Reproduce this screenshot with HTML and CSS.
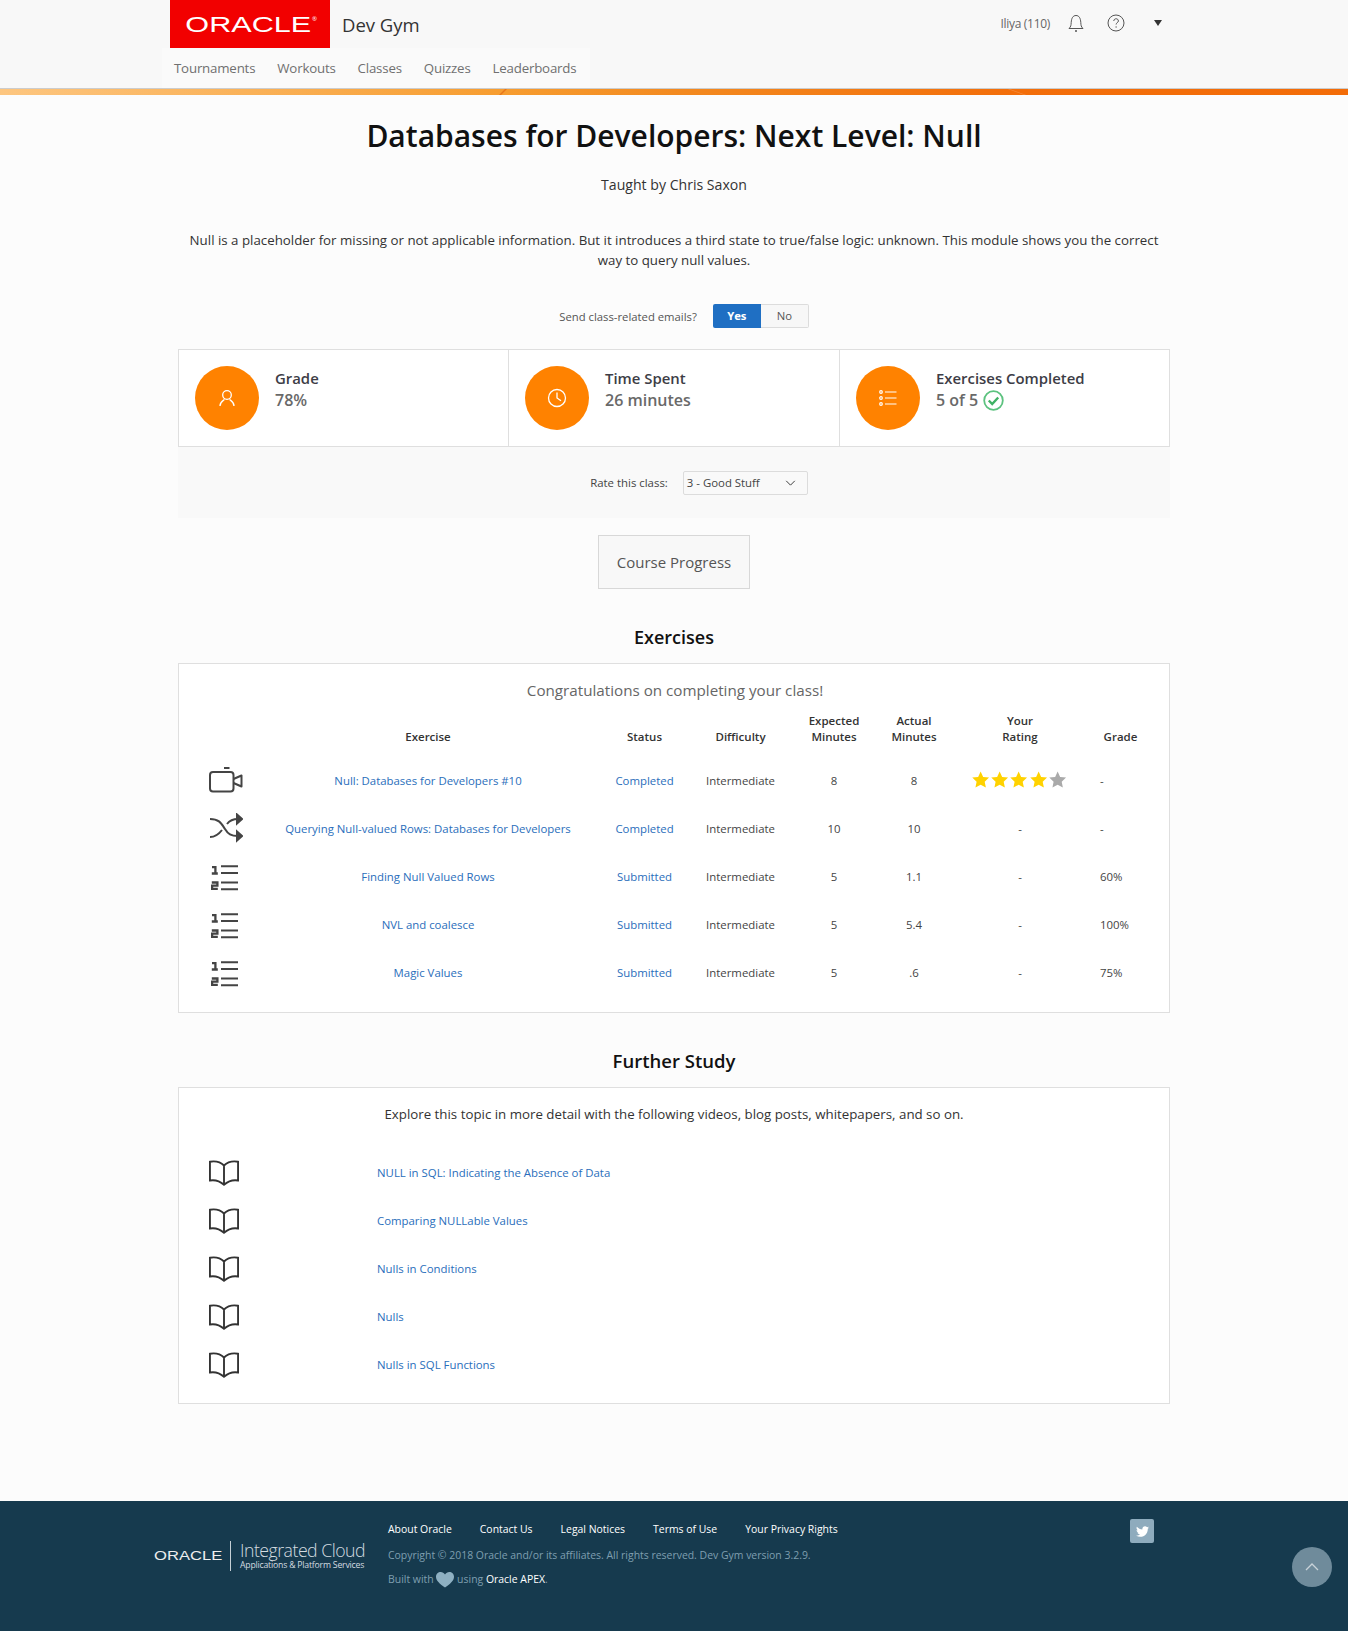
FILE: index.html
```html
<!DOCTYPE html>
<html lang="en">
<head>
    <meta charset="UTF-8">
    <title>Databases for Developers: Next Level: Null - Dev Gym</title>
    <link rel="stylesheet" href="styles.css">
</head>
<body>
    <svg class="sprites" width="0" height="0">
        <symbol id="i-list" viewBox="0 0 28 26">
            <path d="M1 2.200h3.400v6.500M.8 8.500h6M.8 17.500h5.600v3.200H1.100v3.200h5.700" fill="none" stroke="currentColor" stroke-width="2.300"/>
            <path d="M10 1.200h17M10 7.900h17M10 17.500h17M10 24.200h17" stroke="currentColor" stroke-width="2"/>
        </symbol>
        <symbol id="i-book" viewBox="0 0 32 28">
            <path d="M1 2c6-1 11 0 15 4 4-4 9-5 15-4v20c-6-1-11 1-15 4.500C12 23 7 21 1 22zM16 6v20" fill="none" stroke="currentColor" stroke-width="2"/>
        </symbol>
        <symbol id="i-star" viewBox="0 0 20 20">
            <path d="M10 1.500l2.600 5.700 6.100.7-4.500 4.200 1.200 6.100L10 15.200l-5.400 3 1.200-6.100L1.300 7.900l6.100-.7z"/>
        </symbol>
    </svg>

    <!-- Header -->
    <header class="site-header">
        <div class="header-row">
            <a href="#" class="logo"><span>ORACLE</span><sup>®</sup></a>
            <span class="app-name">Dev Gym</span>
            <div class="user-menu">
                <span class="user-name">Iliya (110)</span>
                <svg class="user-icon" width="16" height="18" viewBox="0 0 16 18" fill="none" stroke="#555" stroke-width="1"><path d="M1 14.500h14c-2-2-2-3-2.200-6C12.500 4 11 1.500 8 1.500S3.500 4 3.200 8.500C3 11.500 3 12.500 1 14.500z"/><path d="M7 17h2" stroke-width="1.500"/></svg>
                <svg class="user-icon help" width="18" height="18" viewBox="0 0 18 18" fill="none" stroke="#555"><circle cx="9" cy="9" r="8"/><path d="M6.800 7c0-3 4.600-3 4.600 0 0 1.600-2.300 1.700-2.300 3.500M9.100 12.300v1.400"/></svg>
                <span class="caret"></span>
            </div>
        </div>
        <nav class="main-nav">
            <a href="#">Tournaments</a>
            <a href="#">Workouts</a>
            <a href="#">Classes</a>
            <a href="#">Quizzes</a>
            <a href="#">Leaderboards</a>
        </nav>
    </header>
    <div class="accent-bar"></div>

    <main class="container">
        <h1 class="class-title">Databases for Developers: Next Level: Null</h1>
        <p class="taught-by">Taught by Chris Saxon</p>
        <p class="class-desc">Null is a placeholder for missing or not applicable information. But it introduces a third state to true/false logic: unknown. This module shows you the correct way to query null values.</p>

        <div class="email-row">
            <span>Send class-related emails?</span>
            <div class="toggle">
                <span class="toggle-on">Yes</span>
                <span class="toggle-off">No</span>
            </div>
        </div>

        <!-- Stats -->
        <section class="stats">
            <div class="stat">
                <div class="stat-icon">
                    <svg width="16" height="18" viewBox="0 0 16 18" fill="none" stroke="#fff" stroke-width="1.300"><circle cx="8" cy="6" r="4.300"/><path d="M1 17c0-4 2.500-5 4.500-6.500M15 17c0-4-2.500-5-4.500-6.500"/></svg>
                </div>
                <div>
                    <div class="stat-label">Grade</div>
                    <div class="stat-value">78%</div>
                </div>
            </div>
            <div class="stat">
                <div class="stat-icon">
                    <svg width="20" height="20" viewBox="0 0 20 20" fill="none" stroke="#fff" stroke-width="1.300"><circle cx="10" cy="10" r="8.500"/><path d="M10 4.500V10l4 2.800"/></svg>
                </div>
                <div>
                    <div class="stat-label">Time Spent</div>
                    <div class="stat-value">26 minutes</div>
                </div>
            </div>
            <div class="stat">
                <div class="stat-icon">
                    <svg width="18" height="16" viewBox="0 0 18 16" fill="none" stroke="#fff" stroke-width="1.200"><circle cx="2" cy="2" r="1.300"/><circle cx="2" cy="8" r="1.300"/><circle cx="2" cy="14" r="1.300"/><path d="M6 2h11.500M6 8h11.500M6 14h11.500"/></svg>
                </div>
                <div>
                    <div class="stat-label">Exercises Completed</div>
                    <div class="stat-value">5 of 5
                        <svg class="check" width="21" height="21" viewBox="0 0 21 21" fill="none"><circle cx="10.500" cy="10.500" r="9.300" stroke="#5cc27f" stroke-width="1.800"/><path d="M5.800 10.500l3.400 3.500 6-6.500" stroke="#3fb164" stroke-width="2.400"/></svg>
                    </div>
                </div>
            </div>
        </section>

        <div class="rate-strip">
            <span>Rate this class:</span>
            <div class="rate-select">
                <span>3 - Good Stuff</span>
                <svg width="11" height="6" viewBox="0 0 12 7" fill="none" stroke="#333" stroke-width="1.100"><path d="M1 1l5 5 5-5"/></svg>
            </div>
        </div>

        <div class="progress-wrap"><a href="#" class="progress-btn">Course Progress</a></div>

        <!-- Exercises -->
        <h2 class="section-title">Exercises</h2>
        <section class="card card-exercises">
            <p class="congrats">Congratulations on completing your class!</p>
            <table class="exercise-table">
                <thead>
                    <tr>
                        <th class="col-icon"></th>
                        <th class="col-name">Exercise</th>
                        <th class="col-status">Status</th>
                        <th class="col-diff">Difficulty</th>
                        <th class="col-exp">Expected<br>Minutes</th>
                        <th class="col-act">Actual<br>Minutes</th>
                        <th class="col-rate">Your<br>Rating</th>
                        <th class="col-grade">Grade</th>
                    </tr>
                </thead>
                <tbody>
                    <tr>
                        <td class="icon-cell">
                            <svg class="row-icon" width="34" height="26" viewBox="0 0 34 26" fill="none" stroke="currentColor" stroke-width="2"><rect x="1" y="5" width="23.500" height="19.500" rx="3"/><path d="M15 1h5.500M24.500 12l8-3.500v11l-8-3.500" stroke-linejoin="round"/></svg>
                        </td>
                        <td><a href="#">Null: Databases for Developers #10</a></td>
                        <td><a href="#">Completed</a></td>
                        <td>Intermediate</td>
                        <td>8</td>
                        <td>8</td>
                        <td>
                            <div class="stars">
                                <svg class="star on"><use href="#i-star"/></svg>
                                <svg class="star on"><use href="#i-star"/></svg>
                                <svg class="star on"><use href="#i-star"/></svg>
                                <svg class="star on"><use href="#i-star"/></svg>
                                <svg class="star"><use href="#i-star"/></svg>
                            </div>
                        </td>
                        <td class="grade">-</td>
                    </tr>
                    <tr>
                        <td class="icon-cell">
                            <svg class="row-icon" width="34" height="30" viewBox="0 0 34 30" fill="none" stroke="currentColor" stroke-width="2"><path d="M1 6c9 0 11 4 15 10 3 5 6 7 13 7M1 24c6 0 9-3 12-7M18 11c3-4 6-5 11-5"/><path d="M28 1.500l5 4.500-5 4.500zM28 18.500l5 4.500-5 4.500z" fill="currentColor"/></svg>
                        </td>
                        <td><a href="#">Querying Null-valued Rows: Databases for Developers</a></td>
                        <td><a href="#">Completed</a></td>
                        <td>Intermediate</td>
                        <td>10</td>
                        <td>10</td>
                        <td>-</td>
                        <td class="grade">-</td>
                    </tr>
                    <tr>
                        <td class="icon-cell"><svg class="row-icon list-icon"><use href="#i-list"/></svg></td>
                        <td><a href="#">Finding Null Valued Rows</a></td>
                        <td><a href="#">Submitted</a></td>
                        <td>Intermediate</td>
                        <td>5</td>
                        <td>1.1</td>
                        <td>-</td>
                        <td class="grade">60%</td>
                    </tr>
                    <tr>
                        <td class="icon-cell"><svg class="row-icon list-icon"><use href="#i-list"/></svg></td>
                        <td><a href="#">NVL and coalesce</a></td>
                        <td><a href="#">Submitted</a></td>
                        <td>Intermediate</td>
                        <td>5</td>
                        <td>5.4</td>
                        <td>-</td>
                        <td class="grade">100%</td>
                    </tr>
                    <tr>
                        <td class="icon-cell"><svg class="row-icon list-icon"><use href="#i-list"/></svg></td>
                        <td><a href="#">Magic Values</a></td>
                        <td><a href="#">Submitted</a></td>
                        <td>Intermediate</td>
                        <td>5</td>
                        <td>.6</td>
                        <td>-</td>
                        <td class="grade">75%</td>
                    </tr>
                </tbody>
            </table>
        </section>

        <!-- Further Study -->
        <h2 class="section-title further">Further Study</h2>
        <section class="card card-study">
            <p class="study-intro">Explore this topic in more detail with the following videos, blog posts, whitepapers, and so on.</p>
            <ul class="study-list">
                <li><svg class="book-icon"><use href="#i-book"/></svg><a href="#">NULL in SQL: Indicating the Absence of Data</a></li>
                <li><svg class="book-icon"><use href="#i-book"/></svg><a href="#">Comparing NULLable Values</a></li>
                <li><svg class="book-icon"><use href="#i-book"/></svg><a href="#">Nulls in Conditions</a></li>
                <li><svg class="book-icon"><use href="#i-book"/></svg><a href="#">Nulls</a></li>
                <li><svg class="book-icon"><use href="#i-book"/></svg><a href="#">Nulls in SQL Functions</a></li>
            </ul>
        </section>
    </main>

    <!-- Footer -->
    <footer class="site-footer">
        <div class="footer-brand">
            <span class="footer-oracle"><span>ORACLE</span></span>
            <div class="footer-cloud">
                <div class="cloud-name">Integrated Cloud</div>
                <div class="cloud-sub">Applications &amp; Platform Services</div>
            </div>
        </div>
        <div class="footer-main">
            <div class="footer-links">
                <a href="#">About Oracle</a>
                <a href="#">Contact Us</a>
                <a href="#">Legal Notices</a>
                <a href="#">Terms of Use</a>
                <a href="#">Your Privacy Rights</a>
            </div>
            <p class="copyright">Copyright © 2018 Oracle and/or its affiliates. All rights reserved. Dev Gym version 3.2.9.</p>
            <p class="built-with">Built with <svg class="heart" width="18" height="16" viewBox="0 0 18 16"><path d="M9 15.500C4 12 0 9 0 4.800 0 2 2.200 0 4.700 0 6.500 0 8 .9 9 2.500 10 .9 11.500 0 13.300 0 15.800 0 18 2 18 4.800 18 9 14 12 9 15.500z" fill="#8eb0c2"/></svg> using <a href="#">Oracle APEX</a>.</p>
        </div>
        <a href="#" class="twitter">
            <svg width="13" height="11" viewBox="0 0 16 13"><path d="M16 1.500c-.6.300-1.200.5-1.900.6.700-.4 1.200-1.100 1.400-1.800-.6.400-1.300.7-2.100.8C12.800.4 12 0 11.100 0 9.300 0 7.800 1.500 7.800 3.300c0 .3 0 .5.100.7C5.200 3.900 2.800 2.600 1.100.6.800 1.100.7 1.600.7 2.200c0 1.100.6 2.100 1.500 2.700-.5 0-1-.2-1.500-.4 0 1.600 1.100 2.900 2.600 3.200-.5.100-1 .2-1.500.1.400 1.300 1.600 2.200 3.100 2.300C3.700 11 2 11.600.1 11.400 1.600 12.400 3.300 13 5.100 13c6 0 9.400-5 9.400-9.400v-.4c.6-.5 1.100-1 1.500-1.700z" fill="#fff"/></svg>
        </a>
        <a href="#" class="back-top">
            <svg width="14" height="8" viewBox="0 0 14 8" fill="none" stroke="#c9d3d9" stroke-width="1.300"><path d="M1 7l6-6 6 6"/></svg>
        </a>
    </footer>
</body>
</html>
```

FILE: styles.css
```css
* {
    margin: 0;
    padding: 0;
    box-sizing: border-box;
}

body {
    font-family: "Open Sans", "Noto Sans", sans-serif;
    font-size: 13px;
    color: #333;
    background: #fcfcfc;
    position: relative;
}

a {
    color: #2a6ebb;
    text-decoration: none;
}

.sprites {
    position: absolute;
}

/* Header */
.site-header {
    background: #f8f8f8;
    height: 89px;
    border-bottom: 1px solid #ccc;
}

.header-row {
    display: flex;
    align-items: flex-start;
    height: 48px;
    padding: 0 170px;
}

.logo {
    width: 160px;
    height: 48px;
    background: #f20000;
    display: flex;
    align-items: center;
    justify-content: center;
    overflow: hidden;
    position: relative;
    padding: 1px 3px 0 0;
}

.logo span {
    color: #fff;
    font-family: "Liberation Sans", sans-serif;
    font-size: 22.500px;
    transform: scaleX(1.36);
}

.logo sup {
    position: absolute;
    left: 142px;
    top: 16px;
    color: #fff;
    font-size: 6px;
    line-height: 6px;
}

.app-name {
    font-size: 18.500px;
    margin: 12px 0 0 12px;
    color: #333;
}

.user-menu {
    margin-left: auto;
    display: flex;
    align-items: center;
    padding: 14px 16px 0 0;
    color: #666;
    font-size: 12px;
    letter-spacing: -0.3px;
}

.user-icon {
    margin-left: 18px;
}

.user-icon.help {
    margin-left: 23px;
}

.caret {
    margin-left: 29px;
    border-left: 4px solid transparent;
    border-right: 4px solid transparent;
    border-top: 6px solid #333;
}

.main-nav {
    display: flex;
    gap: 22px;
    width: 428px;
    height: 40px;
    margin-left: 162px;
    padding: 11px 12px 0;
    background: #fafafa;
    font-size: 13.300px;
    letter-spacing: -0.2px;
}

.main-nav a {
    color: #707070;
}

.accent-bar {
    height: 6px;
    position: relative;
    overflow: hidden;
    background: linear-gradient(90deg, #fdc680 0%, #f79d30 37%, #f38a20 50%, #f36e0a 75%, #f36c08 100%);
}

/* faint diagonal marks in the bar */
.accent-bar::before,
.accent-bar::after {
    content: "";
    position: absolute;
    top: 0;
    width: 2px;
    height: 6px;
    background: #e8761a;
    transform: skewX(-45deg);
}

.accent-bar::before {
    left: 502px;
}

.accent-bar::after {
    left: 1016px;
    background: #f58a3a;
    transform: skewX(70deg);
}

/* Main Content */
.container {
    width: 992px;
    margin: 0 auto;
    height: 1406px;
    text-align: center;
}

.class-title {
    font-size: 30px;
    font-weight: 600;
    color: #111;
    padding-top: 19px;
    line-height: 44px;
}

.taught-by {
    font-size: 14.100px;
    margin-top: 17px;
    line-height: 20px;
}

.class-desc {
    font-size: 13.300px;
    line-height: 20px;
    margin: 35px 8px 0;
}

.email-row {
    display: flex;
    justify-content: center;
    align-items: center;
    gap: 16px;
    margin-top: 34px;
    height: 24px;
    padding-left: 20px;
    font-size: 11.300px;
    color: #555;
}

.toggle {
    display: flex;
    height: 24px;
    line-height: 22px;
}

.toggle-on {
    width: 48px;
    background: #1f6fc3;
    color: #fff;
    font-weight: 700;
    border-radius: 2px 0 0 2px;
    line-height: 24px;
}

.toggle-off {
    width: 48px;
    background: #f7f7f7;
    border: 1px solid #dcdcdc;
    border-left: 0;
    border-radius: 0 2px 2px 0;
}

/* Stats */
.stats {
    display: grid;
    grid-template-columns: 329px 331px 1fr;
    margin-top: 21px;
    height: 98px;
    background: #fff;
    border: 1px solid #dfdfdf;
    text-align: left;
}

.stat {
    display: flex;
    gap: 16px;
    padding: 16px;
    border-left: 1px solid #dfdfdf;
}

.stat:first-child {
    border-left: 0;
}

.stat-icon {
    width: 64px;
    height: 64px;
    border-radius: 50%;
    background: #ff8200;
    flex-shrink: 0;
    display: flex;
    align-items: center;
    justify-content: center;
}

.stat-label {
    font-size: 14.900px;
    font-weight: 600;
    line-height: 22px;
    margin-top: 1px;
    color: #3d3d46;
}

.stat-value {
    font-size: 16px;
    font-weight: 600;
    line-height: 23px;
    color: #696969;
    display: flex;
    align-items: center;
    gap: 5px;
}

.rate-strip {
    height: 71px;
    background: #f9f9f9;
    display: flex;
    align-items: center;
    justify-content: center;
    gap: 15px;
    padding-left: 50px;
    font-size: 11.400px;
    color: #444;
}

.rate-select {
    width: 125px;
    height: 24px;
    border: 1px solid #dcdcdc;
    border-radius: 2px;
    display: flex;
    align-items: center;
    justify-content: space-between;
    padding: 0 11px 0 3px;
}

.progress-wrap {
    margin-top: 17px;
}

.progress-btn {
    display: inline-block;
    width: 152px;
    height: 54px;
    line-height: 52px;
    background: #f8f8f8;
    border: 1px solid #d8d8d8;
    color: #555;
    font-size: 15px;
}

.section-title {
    font-size: 18px;
    font-weight: 600;
    color: #111;
    line-height: 28px;
    margin-top: 34px;
}

.further {
    font-size: 18.500px;
    margin-top: 34px;
}

.card {
    background: #fff;
    border: 1px solid #dfdfdf;
    margin-top: 12px;
}

.card-exercises {
    height: 350px;
    padding: 16px 8px 0 10px;
}

.congrats {
    font-size: 15.200px;
    color: #666;
    line-height: 20px;
}

/* Exercises table */
.exercise-table {
    table-layout: fixed;
    width: 972px;
    border-collapse: collapse;
    font-size: 11.400px;
    margin-top: 3px;
}

.exercise-table th {
    font-weight: 600;
    font-size: 11.500px;
    height: 53px;
    line-height: 16px;
    vertical-align: bottom;
    padding-bottom: 11px;
    color: #333;
}

.exercise-table td {
    height: 48px;
    color: #444;
}

.col-icon { width: 77px; }
.col-name { width: 324px; }
.col-status { width: 109px; }
.col-diff { width: 83px; }
.col-exp { width: 104px; }
.col-act { width: 56px; }
.col-rate { width: 156px; }
.col-grade { width: 63px; padding-right: 18px; }

.icon-cell {
    color: #333;
    text-align: left;
    padding-left: 20px;
}

.row-icon {
    display: block;
}

.list-icon {
    width: 28px;
    height: 26px;
    margin: 3px 0 0 2px;
}

.exercise-table td.grade {
    text-align: left;
    padding-left: 2px;
}

.stars {
    display: flex;
    justify-content: center;
    padding-right: 2px;
}

.star {
    width: 19.300px;
    height: 19.300px;
    fill: #aaa;
}

.star.on {
    fill: #ffd200;
}

/* Further study */
.card-study {
    height: 317px;
    padding-top: 16px;
}

.study-intro {
    font-size: 13.300px;
    line-height: 20px;
}

.study-list {
    list-style: none;
    margin-top: 24px;
    text-align: left;
    font-size: 11.400px;
}

.study-list li {
    display: flex;
    align-items: center;
    height: 48px;
    padding-left: 30px;
}

.book-icon {
    width: 30px;
    height: 28px;
    color: #333;
    margin: 2px 138px 0 0;
}

/* Footer */
.site-footer {
    height: 130px;
    background: #163a4e;
    display: flex;
    position: relative;
    padding: 20px 0 0 154px;
    font-size: 10.450px;
    color: #7f9fb0;
}

.footer-brand {
    width: 234px;
    flex-shrink: 0;
    display: flex;
    align-items: center;
    height: 30px;
    margin-top: 20px;
}

.footer-oracle {
    color: #eee;
    font-family: "Liberation Sans", sans-serif;
    font-size: 12.500px;
    width: 76px;
    text-align: left;
}

.footer-oracle span {
    display: inline-block;
    transform: scaleX(1.33);
    transform-origin: left;
}

.footer-cloud {
    border-left: 1px solid #c5cfd5;
    padding-left: 9px;
    color: #d4dce0;
    height: 30px;
}

.cloud-name {
    font-size: 17.700px;
    font-weight: 300;
    line-height: 19px;
    letter-spacing: -0.5px;
    white-space: nowrap;
}

.cloud-sub {
    font-size: 8.700px;
    line-height: 10px;
    letter-spacing: -0.2px;
    white-space: nowrap;
}

.footer-links {
    display: flex;
    gap: 28px;
    line-height: 16px;
}

.footer-links a,
.built-with a {
    color: #fff;
}

.copyright {
    line-height: 16px;
    margin-top: 10px;
}

.built-with {
    line-height: 18px;
    margin-top: 7px;
}

.heart {
    vertical-align: middle;
}

.twitter {
    position: absolute;
    left: 1130px;
    top: 18px;
    width: 24px;
    height: 24px;
    background: #8eabbd;
    border-radius: 2px;
    display: flex;
    align-items: center;
    justify-content: center;
}

.back-top {
    position: absolute;
    left: 1292px;
    top: 46px;
    width: 40px;
    height: 40px;
    border-radius: 50%;
    background: #6f8b9b;
    display: flex;
    align-items: center;
    justify-content: center;
}
```
